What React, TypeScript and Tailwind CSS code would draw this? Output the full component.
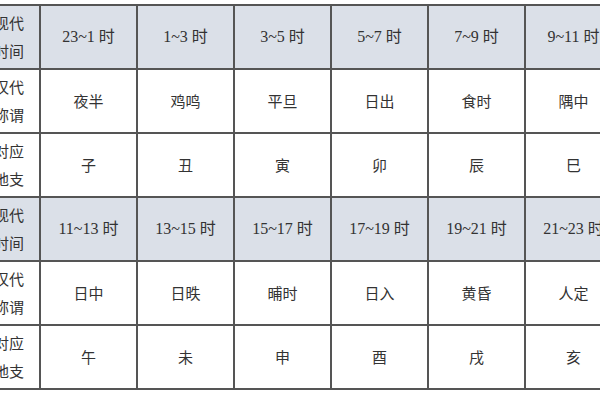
import React from 'react';

type Block = {
    times: string[];
    names: string[];
    branches: string[];
};

const blocks: Block[] = [
    {
        times: ['23~1', '1~3', '3~5', '5~7', '7~9', '9~11'],
        names: ['夜半', '鸡鸣', '平旦', '日出', '食时', '隅中'],
        branches: ['子', '丑', '寅', '卯', '辰', '巳'],
    },
    {
        times: ['11~13', '13~15', '15~17', '17~19', '19~21', '21~23'],
        names: ['日中', '日昳', '晡时', '日入', '黄昏', '人定'],
        branches: ['午', '未', '申', '酉', '戌', '亥'],
    },
];

const cell = 'border-2 border-[#555] text-center align-middle p-0';

function Label({ top, bottom }: { top: string; bottom: string }) {
    return (
        <div className="flex flex-col items-center leading-[28px]">
            <span>{top}</span>
            <span>{bottom}</span>
        </div>
    );
}

export default function App() {
    return (
        <div className="w-[600px] h-[400px] overflow-hidden bg-white pt-[4px] text-[#333] font-['Noto_Sans_CJK_SC',sans-serif] text-[15px]">
            <table className="ml-[-23px] border-collapse table-fixed w-[644px]">
                <colgroup>
                    <col className="w-[62px]" />
                    {[0, 1, 2, 3, 4, 5].map((i) => (
                        <col key={i} className="w-[97px]" />
                    ))}
                </colgroup>
                <tbody>
                    {blocks.map((b, bi) => (
                        <React.Fragment key={bi}>
                            <tr className="h-[64px] bg-[#dbe0e8]">
                                <td className={cell}>
                                    <Label top="现代" bottom="时间" />
                                </td>
                                {b.times.map((t) => (
                                    <td key={t} className={cell}>
                                        <span className="font-['Liberation_Serif','Noto_Sans_CJK_SC',serif] text-[16px]">
                                            {t} 时
                                        </span>
                                    </td>
                                ))}
                            </tr>
                            <tr className="h-[64px] bg-white">
                                <td className={cell}>
                                    <Label top="汉代" bottom="称谓" />
                                </td>
                                {b.names.map((n) => (
                                    <td key={n} className={cell}>
                                        {n}
                                    </td>
                                ))}
                            </tr>
                            <tr className="h-[64px] bg-white">
                                <td className={cell}>
                                    <Label top="对应" bottom="地支" />
                                </td>
                                {b.branches.map((n) => (
                                    <td key={n} className={cell}>
                                        {n}
                                    </td>
                                ))}
                            </tr>
                        </React.Fragment>
                    ))}
                </tbody>
            </table>
        </div>
    );
}
